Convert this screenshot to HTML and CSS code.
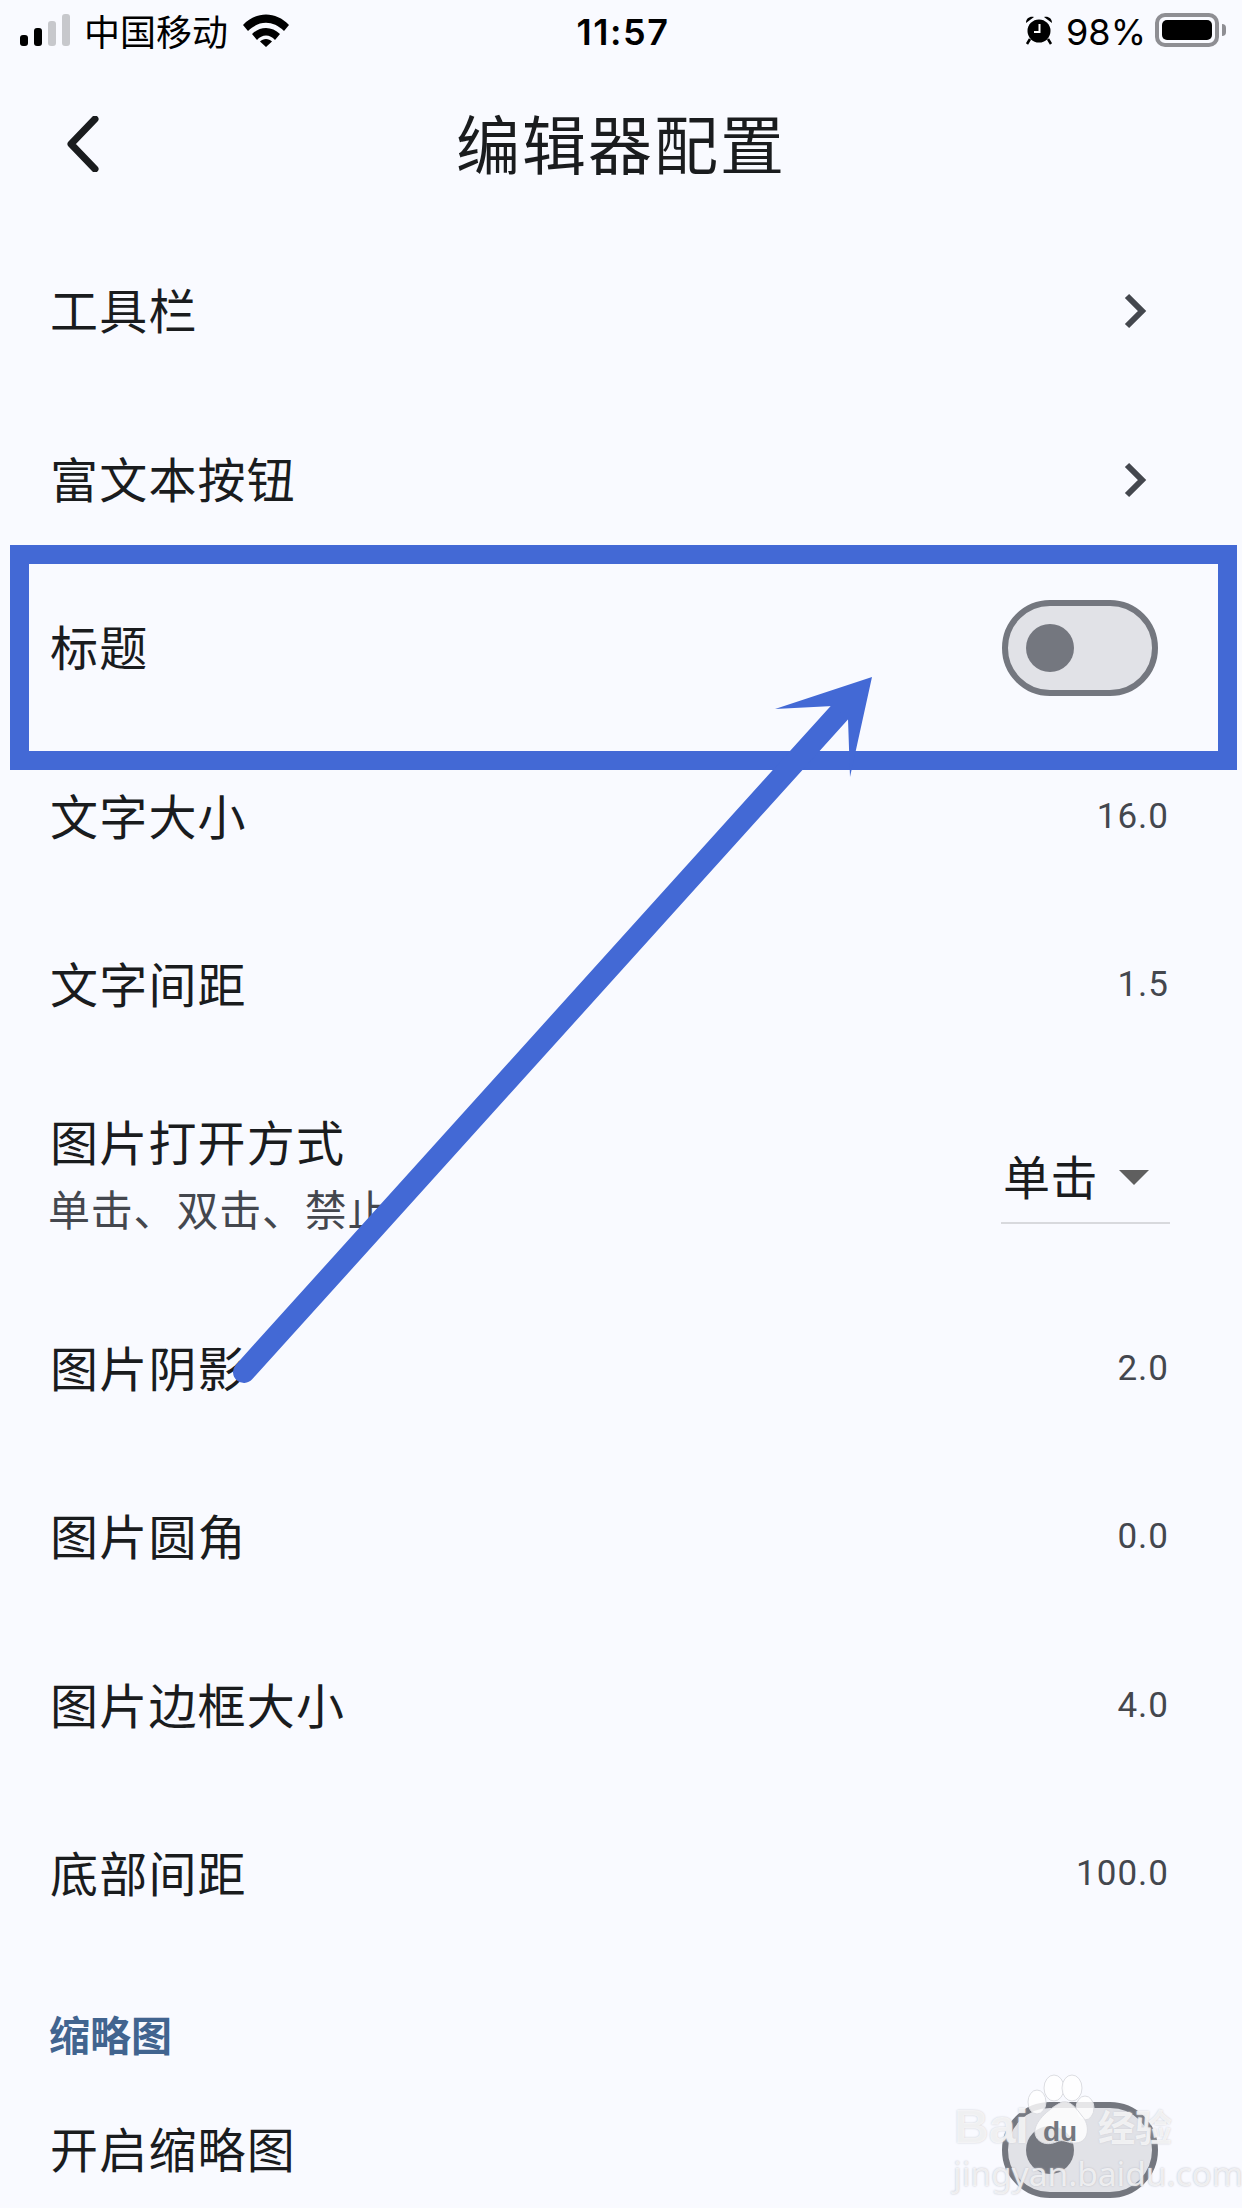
FILE: index.html
```html
<!DOCTYPE html>
<html lang="zh-CN">
<head>
<meta charset="utf-8">
<title>编辑器配置</title>
<link rel="stylesheet" href="styles.css">
</head>
<body>
<div class="page">
  <header class="status">
    <div class="status-left">
      <div class="signal"><i class="b1"></i><i class="b2"></i><i class="b3 off"></i><i class="b4 off"></i></div>
      <span class="carrier">中国移动</span>
      <svg class="wifi" viewBox="0 0 46 33"><path d="M0 11 C13-3 33-3 46 11 L41 17 C30 6 16 6 5 17Z M9 20 C17 12 29 12 37 20 L32 26 C27 20 19 20 14 26Z M17 27.500 C20 24 26 24 29 27.500 L23 33Z" fill="#000"/></svg>
    </div>
    <div class="clock">11:57</div>
    <div class="status-right">
      <svg class="alarm" viewBox="0 0 28 30"><circle cx="14" cy="16" r="11.500" fill="#000"/><path d="M1 8 C1 3 5 1 9 2Z M27 8 C27 3 23 1 19 2Z" fill="#000"/><path d="M5 24 L2 29 M23 24 L26 29" stroke="#000" stroke-width="2.500"/><path d="M14.500 9 V17 H9" stroke="#fff" stroke-width="2" fill="none"/></svg>
      <span class="pct">98%</span>
      <div class="battery"><div class="battery-fill"></div></div>
      <div class="battery-nub"></div>
    </div>
  </header>

  <nav class="nav">
    <svg class="back" viewBox="0 0 32 56"><path d="M28 3 L4 28 L28 53" fill="none" stroke="#1a1c1e" stroke-width="7" stroke-linecap="round" stroke-linejoin="round"/></svg>
    <h1 class="title">编辑器配置</h1>
  </nav>

  <main class="list">
    <div class="row"><span class="label">工具栏</span><svg class="chev" viewBox="0 0 24 36"><path d="M3 3 L18 18 L3 33" fill="none" stroke="#44474e" stroke-width="6"/></svg></div>
    <div class="row"><span class="label">富文本按钮</span><svg class="chev" viewBox="0 0 24 36"><path d="M3 3 L18 18 L3 33" fill="none" stroke="#44474e" stroke-width="6"/></svg></div>
    <div class="row"><span class="label">标题</span><div class="toggle"><div class="thumb"></div></div></div>
    <div class="row"><span class="label">文字大小</span><span class="value">16.0</span></div>
    <div class="row"><span class="label">文字间距</span><span class="value">1.5</span></div>
    <div class="row row-tall">
      <div class="stack"><span class="label">图片打开方式</span><span class="sub">单击、双击、禁止</span></div>
      <div class="select"><span class="select-text">单击</span><span class="caret"></span></div>
    </div>
    <div class="row"><span class="label">图片阴影</span><span class="value">2.0</span></div>
    <div class="row"><span class="label">图片圆角</span><span class="value">0.0</span></div>
    <div class="row"><span class="label">图片边框大小</span><span class="value">4.0</span></div>
    <div class="row"><span class="label">底部间距</span><span class="value">100.0</span></div>
    <div class="section">缩略图</div>
    <div class="row"><span class="label">开启缩略图</span><div class="toggle"><div class="thumb"></div></div></div>
  </main>

  <svg class="annotation" viewBox="0 0 1242 2208">
    <rect x="19.500" y="554.500" width="1208" height="206" fill="none" stroke="#4369d5" stroke-width="19"/>
    <path d="M244 1372 L840 712" stroke="#4369d5" stroke-width="22" stroke-linecap="round" fill="none"/>
    <path d="M872 677 L775 709 L833 706 L848 719 L850 777Z" fill="#4369d5"/>
  </svg>

  <div class="watermark">
    <svg class="paw" viewBox="0 0 90 90">
      <g fill="#fff" fill-opacity=".82" stroke="#dcdde2" stroke-width="1">
        <ellipse cx="28" cy="18" rx="10" ry="13"/>
        <ellipse cx="46" cy="18" rx="10" ry="13"/>
        <ellipse cx="11" cy="32" rx="9" ry="12"/>
        <ellipse cx="59" cy="38" rx="9" ry="12"/>
        <path d="M36 32 C44 30 50 38 56 46 C64 54 64 72 50 73 C42 74 38 68 30 72 C18 77 8 70 9 60 C10 50 24 38 36 32Z"/>
      </g>
    </svg>
    <span class="wm-du">du</span>
    <span class="wm-bai">Bai</span>
    <span class="wm-cn">经验</span>
    <span class="wm-url">jingyan.baidu.com</span>
  </div>
</div>
</body>
</html>
```
FILE: styles.css
```css
* { box-sizing: border-box; margin: 0; padding: 0; }
html, body { width: 1242px; height: 2208px; overflow: hidden; background: #f9faff; }
body { font-family: "Noto Sans CJK SC", "Noto Sans", sans-serif; color: #1a1c1e; }
.page { position: relative; width: 1242px; height: 2208px; overflow: hidden; display: flex; flex-direction: column; }

.status { flex: none; height: 60px; display: grid; grid-template-columns: 1fr auto 1fr; align-items: center; padding: 0 16px 0 20px; color: #000; }
.status-left { display: flex; align-items: center; }
.signal { display: flex; align-items: flex-end; gap: 6px; height: 32px; }
.signal i { display: block; width: 8px; background: #000; border-radius: 3px; }
.signal .b1 { height: 11px; }
.signal .b2 { height: 18px; }
.signal .b3 { height: 25px; }
.signal .b4 { height: 32px; }
.signal .off { background: #c7c8cc; }
.carrier { font-size: 36px; line-height: 44px; margin-left: 14px; font-weight: 400; }
.wifi { width: 46px; height: 33px; margin-left: 15px; }
.clock { font-family: Inter, sans-serif; font-weight: 600; font-size: 36px; letter-spacing: 1.5px; line-height: 44px; margin-top: 4px; }
.status-right { display: flex; align-items: center; justify-content: flex-end; }
.alarm { width: 28px; height: 30px; margin-right: 1px; }
.pct { font-family: Inter, sans-serif; font-size: 36px; line-height: 44px; margin: 4px 0 0 12px; }
.battery { width: 64px; height: 34px; border: 4px solid #8e8e93; border-radius: 10px; padding: 3px; margin-left: 9px; }
.battery-fill { width: 100%; height: 100%; background: #000; border-radius: 5px; }
.battery-nub { width: 4px; height: 12px; background: #8e8e93; border-radius: 0 4px 4px 0; margin-left: 3px; }

.nav { flex: none; height: 167px; display: flex; align-items: center; justify-content: center; position: relative; }
.back { position: absolute; left: 67px; top: 56px; width: 32px; height: 56px; }
.title { font-size: 64px; font-weight: 400; letter-spacing: 2px; line-height: 80px; margin-top: -6px; }

.list { flex: none; display: flex; flex-direction: column; }
.row { height: 168.5px; flex: none; display: flex; align-items: center; justify-content: space-between; padding: 0 75px 0 50px; }
.row-tall { height: 215px; padding-right: 72px; }
.label { font-size: 48px; letter-spacing: 1.2px; line-height: 60px; margin-top: -6px; }
.stack { display: flex; flex-direction: column; }
.sub { font-size: 42px; letter-spacing: .8px; line-height: 60px; color: #44474e; margin-left: -2px; margin-top: 8px; }
.value { font-family: Roboto, sans-serif; font-size: 35px; letter-spacing: 1px; color: #44474e; line-height: 44px; margin-right: -2px; }
.chev { width: 24px; height: 36px; margin-right: 19px; }
.toggle { width: 156px; height: 96px; border: 6px solid #74777f; border-radius: 48px; background: #e1e2e7; margin-right: 9px; display: flex; align-items: center; padding-left: 18px; }
.thumb { width: 48px; height: 48px; border-radius: 50%; background: #74777f; }
.select { width: 169px; height: 74px; border-bottom: 2px solid #d8d9dd; display: flex; align-items: flex-start; padding-left: 2px; margin-top: 20px; }
.select-text { font-size: 47px; letter-spacing: .5px; line-height: 50px; }
.caret { width: 0; height: 0; border-left: 15px solid transparent; border-right: 15px solid transparent; border-top: 15px solid #5f5f5f; margin-left: 21px; margin-top: 20px; }
.section { height: 107px; padding: 47px 0 0 49px; font-size: 41px; line-height: 54px; font-weight: 700; color: #41648f; flex: none; }

.annotation { position: absolute; left: 0; top: 0; width: 1242px; height: 2208px; pointer-events: none; }

.watermark { position: absolute; left: 950px; top: 2070px; width: 240px; height: 120px; color: #fff; }
.paw { position: absolute; left: 76px; top: 0; width: 90px; height: 90px; }
.wm-du, .wm-bai, .wm-cn, .wm-url { position: absolute; white-space: nowrap; }
.wm-du { left: 93px; top: 44px; font: 700 28px/36px "Liberation Sans", sans-serif; color: #74777f; }
.wm-bai { left: 4px; top: 29px; font: 700 48px/56px "Liberation Sans", sans-serif; color: rgba(255,255,255,.72); text-shadow: 0 0 2px #c9cad0; }
.wm-cn { left: 148px; top: 28px; font-size: 37px; line-height: 56px; font-weight: 700; color: rgba(255,255,255,.72); text-shadow: 0 0 2px #c9cad0; }
.wm-url { left: 3px; top: 81px; font: 400 33.500px/44px "Noto Sans", sans-serif; color: rgba(255,255,255,.72); text-shadow: 0 0 2px #b9bac2; }
```
